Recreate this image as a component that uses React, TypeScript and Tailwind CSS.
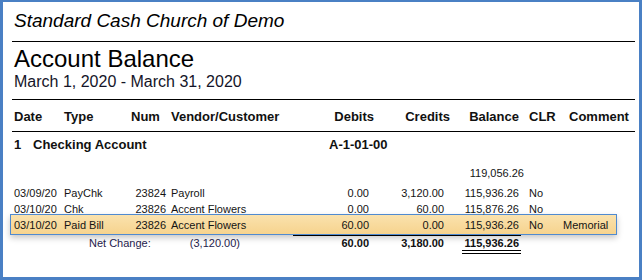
const font = { fontFamily: '"Liberation Sans", Arial, sans-serif' };

const rows = [
  { date: '03/09/20', type: 'PayChk', num: '23824', name: 'Payroll', debit: '0.00', credit: '3,120.00', balance: '115,936.26', clr: 'No', comment: '' },
  { date: '03/10/20', type: 'Chk', num: '23826', name: 'Accent Flowers', debit: '0.00', credit: '60.00', balance: '115,876.26', clr: 'No', comment: '' },
  { date: '03/10/20', type: 'Paid Bill', num: '23826', name: 'Accent Flowers', debit: '60.00', credit: '0.00', balance: '115,936.26', clr: 'No', comment: 'Memorial', selected: true },
];

function Row({ row }: { row: (typeof rows)[number] }) {
  return (
    <div className="relative h-[16px] pl-[2px] text-[11px] leading-[16px] text-[#141414]">
      {row.selected && (
        <div className="absolute -top-[3px] -bottom-[2px] -left-[2px] right-[18px] border border-[#4f8ad0] bg-gradient-to-b from-[#fae2ad] to-[#f6d38e] shadow-[0_3px_6px_rgba(0,0,0,0.22)]" />
      )}
      <div className="relative z-10 flex">
        <span className="w-[50px]">{row.date}</span>
        <span className="w-[62px]">{row.type}</span>
        <span className="w-[40px] text-right">{row.num}</span>
        <span className="w-[148px] pl-[5px]">{row.name}</span>
        <span className="w-[55px] text-right">{row.debit}</span>
        <span className="w-[75px] text-right">{row.credit}</span>
        <span className="w-[75px] text-right">{row.balance}</span>
        <span className="w-[44px] pl-[10px]">{row.clr}</span>
        <span>{row.comment}</span>
      </div>
    </div>
  );
}

export default function App() {
  return (
    <div
      style={font}
      className="h-[280px] w-[642px] overflow-hidden border-t-2 border-r-[3px] border-b-[3px] border-l-[3px] border-[#4a80c4] bg-white text-black"
    >
      <div className="ml-[9px] mr-[4px]">
        <div className="pt-[9px] pl-[2px] text-[19px] italic leading-[19px]">Standard Cash Church of Demo</div>
        <div className="mt-[11px] h-px bg-black" />

        <div className="mt-[5px] pl-[2px] text-[24px] leading-[24px]">Account Balance</div>
        <div className="mt-[3px] pl-[2px] text-[16px] leading-[16px] text-[#141428]">March 1, 2020 - March 31, 2020</div>
        <div className="mt-[9px] h-px bg-black" />

        <div className="mt-[10px] flex pl-[2px] text-[13px] font-bold leading-[13px] text-[#111]">
          <span className="w-[50px]">Date</span>
          <span className="w-[67px]">Type</span>
          <span className="w-[40px]">Num</span>
          <span className="w-[143px]">Vendor/Customer</span>
          <span className="w-[60px] text-right">Debits</span>
          <span className="w-[76px] text-right">Credits</span>
          <span className="w-[69px] text-right">Balance</span>
          <span className="w-[50px] pl-[10px]">CLR</span>
          <span>Comment</span>
        </div>
        <div className="mt-[8px] h-px bg-black" />

        <div className="mt-[6px] flex pl-[2px] text-[13px] font-bold leading-[13px] text-[#111]">
          <span className="w-[19px]">1</span>
          <span className="w-[296px]">Checking Account</span>
          <span>A-1-01-00</span>
        </div>

        <div className="mt-[14px] flex h-[16px] pl-[2px] text-[11px] leading-[16px] text-[#141414]">
          <span className="w-[510px] text-right">119,056.26</span>
        </div>

        <div className="mt-[4px]">
          {rows.map((row) => (
            <Row key={row.date + row.type} row={row} />
          ))}
        </div>

        <div className="mt-[2px] ml-[281px] h-px w-[228px] bg-black" />
        <div className="flex pl-[2px] text-[11px] leading-[14px]">
          <span className="w-[75px]" />
          <span className="w-[79px] text-[#1f1b4e]">Net Change:</span>
          <span className="w-[72px] text-right text-[#1f1b4e]">(3,120.00)</span>
          <span className="w-[129px] text-right font-bold text-[#111]">60.00</span>
          <span className="w-[75px] text-right font-bold text-[#111]">3,180.00</span>
          <div className="ml-[18px] flex w-[59px] flex-col">
            <span className="pr-[2px] text-right font-bold text-[#111]">115,936.26</span>
            <div className="h-px bg-black" />
            <div className="mt-[2px] h-px bg-black" />
          </div>
        </div>
      </div>
    </div>
  );
}
